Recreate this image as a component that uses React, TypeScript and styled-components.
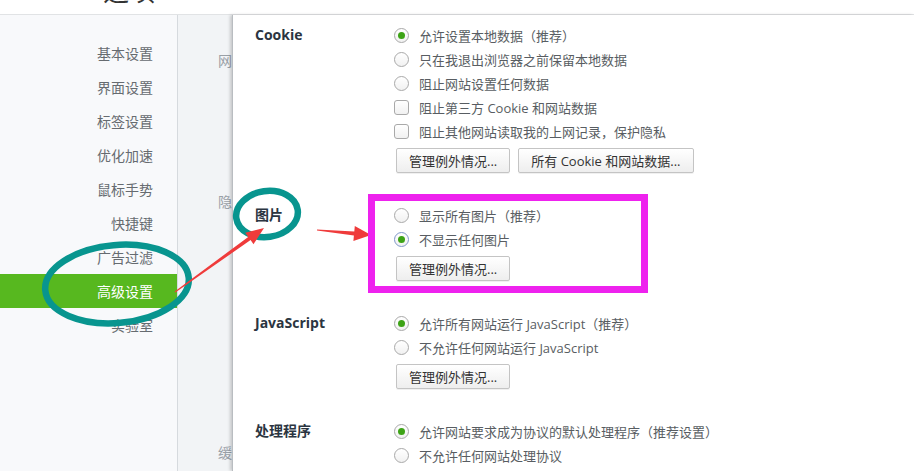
import styled, { createGlobalStyle } from "styled-components";

const GlobalStyle = createGlobalStyle`
  html, body {
    margin: 0;
    padding: 0;
    overflow: hidden;
    background: #ffffff;
  }
  body {
    font-family: "Open Sans", "Noto Sans CJK SC", sans-serif;
  }
  #root {
    height: 471px;
  }
`;

const Page = styled.div`
  position: relative;
  width: 914px;
  height: 471px;
  display: flex;
  flex-direction: column;
  overflow: hidden;
`;

const Header = styled.div`
  height: 15px;
  flex-shrink: 0;
  box-sizing: border-box;
  border-bottom: 1px solid #e1e3e5;
  overflow: hidden;
  padding-left: 103px;
  background: #ffffff;
`;

const Title = styled.div`
  margin-top: -23px;
  font-family: "Noto Sans CJK SC", sans-serif;
  font-size: 26px;
  line-height: 26px;
  color: #333;
`;

const Body = styled.div`
  flex: 1;
  display: flex;
  min-height: 0;
`;

const Sidebar = styled.nav`
  width: 178px;
  flex-shrink: 0;
  box-sizing: border-box;
  background: #f8f9fb;
  border-right: 1px solid #d6dade;
  padding-top: 21px;
  display: flex;
  flex-direction: column;
`;

const NavItem = styled.div<{ $active?: boolean }>`
  height: 34px;
  line-height: 34px;
  text-align: right;
  padding-right: 24px;
  font-family: "Noto Sans CJK SC", sans-serif;
  font-size: 14px;
  color: ${(p) => (p.$active ? "#ffffff" : "#666b70")};
  background: ${(p) => (p.$active ? "#57b81f" : "transparent")};
`;

const Strip = styled.div`
  width: 54px;
  flex-shrink: 0;
  background: #f2f4f6;
  overflow: hidden;
  white-space: nowrap;
  padding-left: 40px;
  box-sizing: border-box;
  display: flex;
  flex-direction: column;
`;

const StripLabel = styled.div<{ $gap: number }>`
  margin-top: ${(p) => p.$gap}px;
  height: 20px;
  line-height: 20px;
  font-family: "Noto Sans CJK SC", sans-serif;
  font-size: 14px;
  color: #9aa0a7;
`;

const Dialog = styled.div`
  flex: 1;
  position: relative;
  background: #ffffff;
  border-left: 1px solid #b9bdc1;
  box-shadow: -2px 0 3px rgba(0, 0, 0, 0.18);
  padding: 8px 0 0 22px;
  display: flex;
  flex-direction: column;
  gap: 30px;
`;

const Section = styled.section`
  display: grid;
  grid-template-columns: 139px 1fr;
`;

const Label = styled.div`
  height: 24px;
  line-height: 24px;
  font-family: "Open Sans", "Noto Sans CJK SC", sans-serif;
  font-weight: 700;
  font-size: 14px;
  color: #2b3541;
`;

const Options = styled.div`
  display: flex;
  flex-direction: column;
`;

const Row = styled.div`
  height: 24px;
  display: flex;
  align-items: center;
  gap: 10px;
  font-size: 13px;
  color: #585d62;
  white-space: nowrap;
  text-spacing-trim: space-all;
`;

const Radio = styled.span<{ $checked?: boolean; $focus?: boolean }>`
  width: 15px;
  height: 15px;
  box-sizing: border-box;
  border-radius: 50%;
  border: 1px solid ${(p) => (p.$focus ? "#7f97c9" : "#a9a9a9")};
  background: linear-gradient(#ffffff, #f1f1f1);
  display: flex;
  align-items: center;
  justify-content: center;
  flex-shrink: 0;

  &::after {
    content: "";
    width: 7px;
    height: 7px;
    border-radius: 50%;
    background: #3da316;
    display: ${(p) => (p.$checked ? "block" : "none")};
  }
`;

const Checkbox = styled.span`
  width: 15px;
  height: 15px;
  box-sizing: border-box;
  border-radius: 3px;
  border: 1px solid #a9a9a9;
  background: linear-gradient(#ffffff, #f1f1f1);
  flex-shrink: 0;
`;

const Buttons = styled.div`
  display: flex;
  gap: 8px;
  margin-top: 5px;
  margin-left: 2px;
`;

const Button = styled.button`
  height: 25px;
  padding: 0 12px;
  border: 1px solid #c4c4c4;
  border-radius: 2px;
  background: linear-gradient(#ffffff, #eeeeee);
  box-shadow: 0 1px 0 rgba(0, 0, 0, 0.06);
  font-family: "Open Sans", "Noto Sans CJK SC", sans-serif;
  font-size: 13px;
  color: #333;
  white-space: nowrap;
`;

const Overlay = styled.svg`
  position: absolute;
  left: 0;
  top: 0;
  pointer-events: none;
`;

type Opt = { text: string; kind: "radio" | "check"; checked?: boolean; focus?: boolean };

const sections: { label: string; options: Opt[]; buttons: string[] }[] = [
  {
    label: "Cookie",
    options: [
      { text: "允许设置本地数据（推荐）", kind: "radio", checked: true },
      { text: "只在我退出浏览器之前保留本地数据", kind: "radio" },
      { text: "阻止网站设置任何数据", kind: "radio" },
      { text: "阻止第三方 Cookie 和网站数据", kind: "check" },
      { text: "阻止其他网站读取我的上网记录，保护隐私", kind: "check" },
    ],
    buttons: ["管理例外情况...", "所有 Cookie 和网站数据..."],
  },
  {
    label: "图片",
    options: [
      { text: "显示所有图片（推荐）", kind: "radio" },
      { text: "不显示任何图片", kind: "radio", checked: true, focus: true },
    ],
    buttons: ["管理例外情况..."],
  },
  {
    label: "JavaScript",
    options: [
      { text: "允许所有网站运行 JavaScript（推荐）", kind: "radio", checked: true },
      { text: "不允许任何网站运行 JavaScript", kind: "radio" },
    ],
    buttons: ["管理例外情况..."],
  },
  {
    label: "处理程序",
    options: [
      { text: "允许网站要求成为协议的默认处理程序（推荐设置）", kind: "radio", checked: true },
      { text: "不允许任何网站处理协议", kind: "radio" },
    ],
    buttons: ["管理例外情况..."],
  },
];

const navItems = ["基本设置", "界面设置", "标签设置", "优化加速", "鼠标手势", "快捷键", "广告过滤", "高级设置", "实验室"];

// tapered arrow, thin at the tail and wide at the head
const arrow = (x1: number, y1: number, x2: number, y2: number, tail: number, shaft: number, headLen: number, headW: number) => {
  const L = Math.hypot(x2 - x1, y2 - y1);
  const ux = (x2 - x1) / L;
  const uy = (y2 - y1) / L;
  const nx = -uy;
  const ny = ux;
  const bx = x2 - ux * headLen;
  const by = y2 - uy * headLen;
  const pts = [
    [x1 + (nx * tail) / 2, y1 + (ny * tail) / 2],
    [bx + (nx * shaft) / 2, by + (ny * shaft) / 2],
    [bx + (nx * headW) / 2, by + (ny * headW) / 2],
    [x2, y2],
    [bx - (nx * headW) / 2, by - (ny * headW) / 2],
    [bx - (nx * shaft) / 2, by - (ny * shaft) / 2],
    [x1 - (nx * tail) / 2, y1 - (ny * tail) / 2],
  ];
  return pts.map((p) => p.map((v) => v.toFixed(1)).join(",")).join(" ");
};

const App = () => {
  return (
    <>
      <GlobalStyle />
      <Page>
        <Header>
          <Title>选项</Title>
        </Header>
        <Body>
          <Sidebar>
            {navItems.map((item) => (
              <NavItem key={item} $active={item === "高级设置"}>
                {item}
              </NavItem>
            ))}
          </Sidebar>
          <Strip>
            <StripLabel $gap={35}>网页内容</StripLabel>
            <StripLabel $gap={121}>隐私设置</StripLabel>
            <StripLabel $gap={231}>缓存目录</StripLabel>
          </Strip>
          <Dialog>
            {sections.map((s) => (
              <Section key={s.label}>
                <Label>{s.label}</Label>
                <Options>
                  {s.options.map((o) => (
                    <Row key={o.text}>
                      {o.kind === "radio" ? <Radio $checked={o.checked} $focus={o.focus} /> : <Checkbox />}
                      {o.text}
                    </Row>
                  ))}
                  <Buttons>
                    {s.buttons.map((b) => (
                      <Button key={b}>{b}</Button>
                    ))}
                  </Buttons>
                </Options>
              </Section>
            ))}
          </Dialog>
        </Body>
        <Overlay width="914" height="471" viewBox="0 0 914 471">
          <ellipse cx="117" cy="284" rx="72" ry="39" fill="none" stroke="#08958f" strokeWidth="6.5" transform="rotate(-5 117 284)" />
          <ellipse cx="267" cy="214" rx="31" ry="23" fill="none" stroke="#08958f" strokeWidth="6.5" transform="rotate(-8 267 214)" />
          <polygon points={arrow(175, 292, 264, 228, 1, 4, 18, 14)} fill="#ef3b3b" />
          <polygon points={arrow(317, 230, 371, 235, 1, 4, 17, 15)} fill="#ef3b3b" />
          <rect x="371.5" y="197.5" width="273" height="92" fill="none" stroke="#ee22ee" strokeWidth="7" />
        </Overlay>
      </Page>
    </>
  );
};

export default App;
